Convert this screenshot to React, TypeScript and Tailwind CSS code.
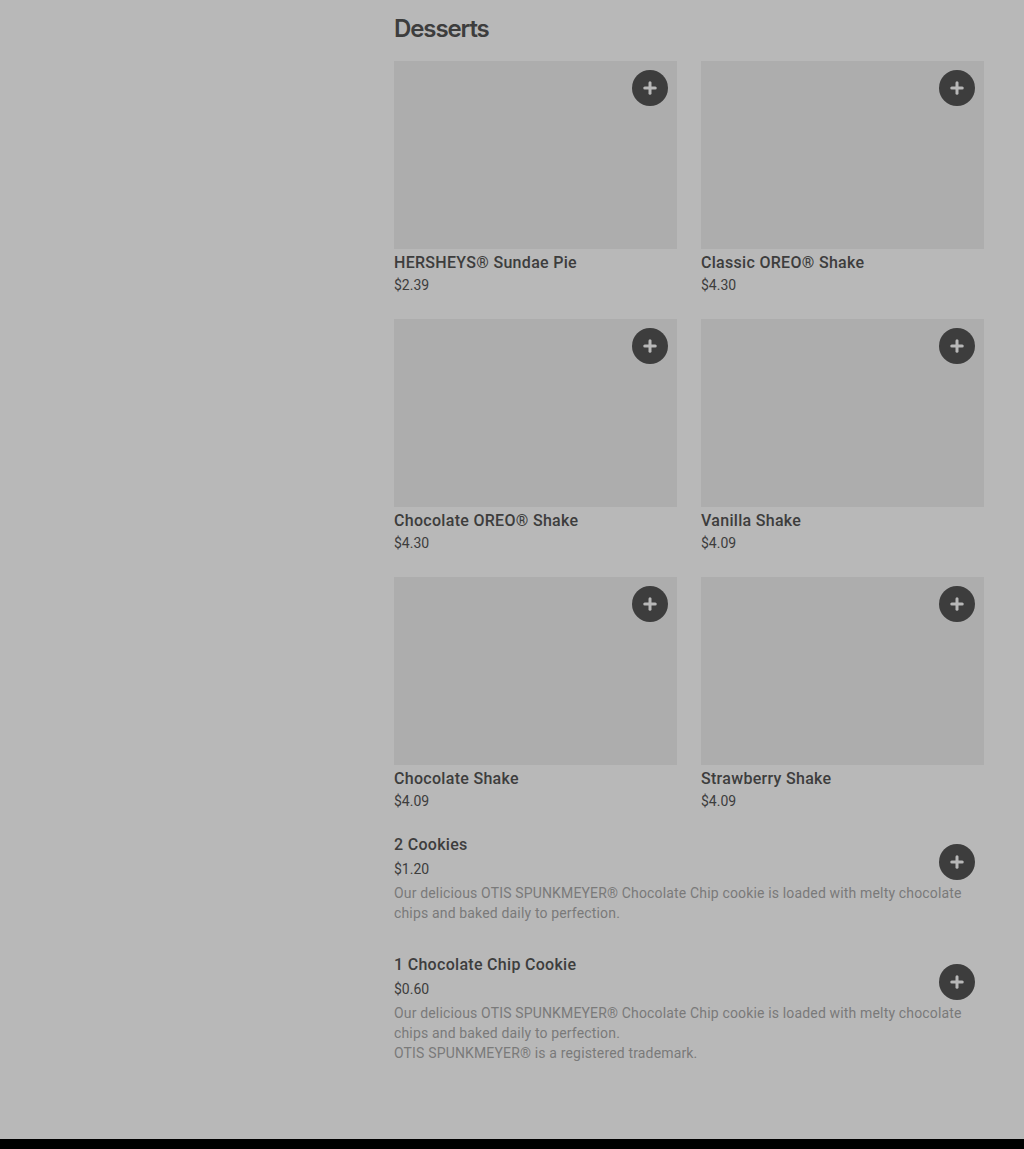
import { Plus } from "lucide-react";

const cards = [
  { name: "HERSHEYS® Sundae Pie", price: "$2.39" },
  { name: "Classic OREO® Shake", price: "$4.30" },
  { name: "Chocolate OREO® Shake", price: "$4.30" },
  { name: "Vanilla Shake", price: "$4.09" },
  { name: "Chocolate Shake", price: "$4.09" },
  { name: "Strawberry Shake", price: "$4.09" },
];

const listItems = [
  {
    name: "2 Cookies",
    price: "$1.20",
    lines: [
      "Our delicious OTIS SPUNKMEYER® Chocolate Chip cookie is loaded with melty chocolate chips and baked daily to perfection.",
    ],
  },
  {
    name: "1 Chocolate Chip Cookie",
    price: "$0.60",
    lines: [
      "Our delicious OTIS SPUNKMEYER® Chocolate Chip cookie is loaded with melty chocolate chips and baked daily to perfection.",
      "OTIS SPUNKMEYER® is a registered trademark.",
    ],
  },
];

function AddButton({ className }: { className: string }) {
  return (
    <button className={`flex h-9 w-9 items-center justify-center rounded-full bg-[#3d3d3d] text-[#b8b8b8] ${className}`}>
      <Plus size={18} strokeWidth={4} />
    </button>
  );
}

export default function App() {
  return (
    <div className="flex min-h-[1149px] flex-col bg-[#b8b8b8] font-['Roboto',sans-serif] text-[#3d3d3d]">
      <main className="flex flex-1 justify-end pr-10">
        <div className="w-[590px]">
          <h2 className="h-[61px] pt-[13px] font-['Inter',sans-serif] text-2xl leading-8 font-semibold tracking-[-1.1px]">Desserts</h2>

          <div className="grid grid-cols-2 gap-x-6 gap-y-6">
            {cards.map((card) => (
              <div key={card.name} className="h-[234px]">
                <div className="relative h-[188px] bg-[#adadad]">
                  <AddButton className="absolute top-[9px] right-[9px]" />
                </div>
                <div className="mt-[2px] text-base leading-6 font-medium tracking-[0.3px]">{card.name}</div>
                <div className="text-sm leading-5">{card.price}</div>
              </div>
            ))}
          </div>

          <div className="mt-[22px] flex flex-col gap-[30px]">
            {listItems.map((item) => (
              <div key={item.name} className="relative">
                <div className="text-base leading-6 font-medium tracking-[0.3px]">{item.name}</div>
                <div className="mt-[2px] text-sm leading-5">{item.price}</div>
                <div className="mt-[4px] pr-[20px] text-sm leading-5 tracking-[0.16px] text-[#7a7a7a]">
                  {item.lines.map((line) => (
                    <p key={line}>{line}</p>
                  ))}
                </div>
                <AddButton className="absolute top-[11px] right-[9px]" />
              </div>
            ))}
          </div>
        </div>
      </main>
      <footer className="h-[10px] bg-black" />
    </div>
  );
}
